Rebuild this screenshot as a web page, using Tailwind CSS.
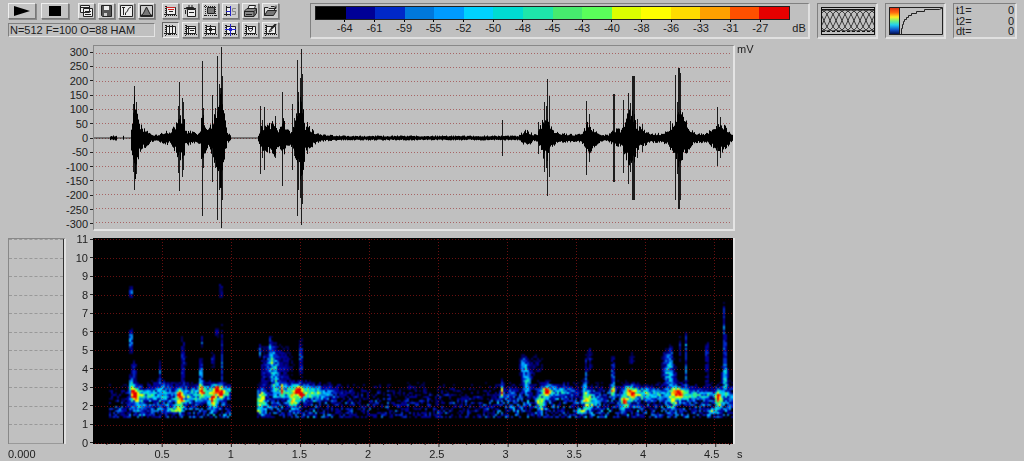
<!DOCTYPE html>
<html lang="en">
<head>
    <meta charset="UTF-8">
    <meta name="viewport" content="width=device-width, initial-scale=1.0">
    <title>Sound Analysis</title>
    <script src="https://cdn.jsdelivr.net/npm/@tailwindcss/browser@4"></script>
</head>
<body class="bg-[#c0c0c0] min-h-screen text-[11px] leading-3 text-[#202020] font-['Liberation_Sans',Arial,sans-serif] overflow-x-hidden">

    <!-- Toolbar -->
    <header class="flex items-start pl-2 pr-[7px] pt-[3px] gap-[7px]">
        <div class="flex gap-[7px] mr-6 shrink-0">
            <div class="flex flex-col gap-1 w-[147px]">
                <div class="flex justify-between">
                    <button aria-label="Play" class="w-7 h-4 bg-[#c4c4c4] border border-t-[#eee] border-l-[#eee] border-r-[#777] border-b-[#777] shadow-[1px_1px_0_#8a8a8a] flex items-center justify-center">
                        <svg width="16" height="10" viewBox="0 0 16 10"><path d="M0 0L16 5L0 10Z" fill="#000"/></svg>
                    </button>
                    <button aria-label="Stop" class="w-7 h-4 bg-[#c4c4c4] border border-t-[#eee] border-l-[#eee] border-r-[#777] border-b-[#777] shadow-[1px_1px_0_#8a8a8a] flex items-center justify-center">
                        <svg width="12" height="10"><rect width="12" height="10" fill="#000"/></svg>
                    </button>
                    <div id="fileTools" class="flex gap-[3px] ml-1"></div>
                </div>
                <div class="h-[14px] pl-px whitespace-nowrap border border-t-[#808080] border-l-[#808080] border-r-[#e4e4e4] border-b-[#e4e4e4]">N=512 F=100 O=88 HAM</div>
            </div>
            <div id="viewTools" class="grid grid-cols-6 gap-x-[3px] gap-y-[3px]"></div>
        </div>

        <!-- dB scale -->
        <div class="flex-1 flex h-9 pl-1 pt-[2px] border-t border-l border-t-[#808080] border-l-[#808080] border-r-2 border-b-2 border-r-[#e0e0e0] border-b-[#e0e0e0]">
            <div class="flex-1">
                <div id="scaleBar" class="flex h-[14px] border border-[#202020]"></div>
                <div id="scaleLabels" class="grid grid-cols-[repeat(32,minmax(0,1fr))]"></div>
            </div>
            <div class="w-[18px] pt-4 text-center">dB</div>
        </div>

        <!-- window overlap -->
        <div class="w-[61px] h-9 shrink-0 p-[3px] border-t border-l border-t-[#808080] border-l-[#808080] border-r-2 border-b-2 border-r-[#e0e0e0] border-b-[#e0e0e0]">
            <svg id="overlap" width="54" height="28" viewBox="0 0 54 28" fill="none" stroke="#111"></svg>
        </div>

        <!-- colour curve -->
        <div class="w-[61px] h-9 shrink-0 p-[3px] border-t border-l border-t-[#808080] border-l-[#808080] border-r-2 border-b-2 border-r-[#e0e0e0] border-b-[#e0e0e0]">
            <svg width="54" height="28" viewBox="0 0 54 28" fill="none" stroke="#222">
                <defs>
                    <linearGradient id="rainbow" x1="0" y1="0" x2="0" y2="1">
                        <stop offset="0" stop-color="#d82010"/><stop offset=".2" stop-color="#ff6a10"/>
                        <stop offset=".36" stop-color="#ffec20"/><stop offset=".5" stop-color="#70f080"/>
                        <stop offset=".64" stop-color="#20d0f0"/><stop offset=".82" stop-color="#1050c8"/>
                        <stop offset="1" stop-color="#000030"/>
                    </linearGradient>
                </defs>
                <rect x="0" y="0" width="10" height="28" fill="url(#rainbow)" stroke="none"/>
                <path d="M.5 .5H53.5V27.5H.5ZM10.5 0V28"/>
                <path d="M12.5 27V21.5H13.5V17.5H14.5V14.5H15.5V12.5H17.5V10.5H19.5V8.5H22.5V6.5H27.5V4.5H35.5V2.5H50.5L53 1"/>
            </svg>
        </div>

        <!-- cursor times -->
        <dl class="w-16 h-9 shrink-0 grid grid-cols-2 pl-[2px] pr-px pt-px leading-[10px] border-t border-l border-t-[#808080] border-l-[#808080] border-r-2 border-b-2 border-r-[#e0e0e0] border-b-[#e0e0e0]">
            <dt>t1=</dt><dd class="text-right">0</dd>
            <dt>t2=</dt><dd class="text-right">0</dd>
            <dt>dt=</dt><dd class="text-right">0</dd>
        </dl>
    </header>

    <main class="grid grid-cols-[58px_27px_63.2%_1fr] pl-2 pt-[6px]">
        <!-- waveform -->
        <div></div>
        <div id="mvLabels" class="flex flex-col"></div>
        <div class="h-[186px] border-t border-l border-t-[#888] border-l-[#888] border-r-2 border-b-2 border-r-[#e4e4e4] border-b-[#e4e4e4]">
            <canvas id="wave" width="639" height="183" class="block w-full h-full"></canvas>
        </div>
        <div class="pl-[2px] -mt-[2px]">mV</div>

        <!-- spectrogram -->
        <div class="mt-[7px] h-[206px] border-t border-l border-[#888] border-r-2 border-r-[#e0e0e0]">
            <div id="spectrumRows" class="h-full flex flex-col border-r border-[#303030] border-b border-b-[#999]"></div>
        </div>
        <div id="khzLabels" class="flex flex-col -mt-[1px] -mb-[8px]"></div>
        <div class="mt-[7px] h-[206px] border-r-2 border-[#e4e4e4] bg-black">
            <canvas id="spectrogram" width="640" height="206" class="block w-full h-full"></canvas>
        </div>
        <div></div>

        <!-- time axis -->
        <div class="pt-1">0.000</div>
        <div></div>
        <div>
            <svg id="timeTicks" class="block w-full h-1" stroke="#222"></svg>
            <div id="timeLabels" class="flex"><span class="w-[5.4%] shrink-0"></span></div>
        </div>
        <div class="pl-[2px] pt-1">s</div>
    </main>

    <script>
        const palette = ['#000000', '#000096', '#0028c8', '#0078dc', '#009bff', '#00d2ff', '#00dcd2', '#1ee6aa',
            '#46eb6e', '#5aff5a', '#dcff00', '#ffff00', '#ffdc00', '#ffa000', '#ff5000', '#e60000'];
        const dbValues = [-64, -61, -59, -55, -52, -50, -48, -45, -43, -40, -38, -36, -33, -31, -27];
        const duration = 4.64;

        // fixed seed so every reload draws the same recording
        let seed = 4711;
        function rnd() {
            seed = (seed * 1664525 + 1013904223) >>> 0;
            return seed / 4294967296;
        }

        // ---- toolbar icons, 13 x 12 ----
        const frame = '<path fill="#eee" stroke="none" d="M3 3H11V9H3Z"/><path d="M2.5 1V11M0 9.5H12M2 2.5H11.5V9"/><path stroke-dasharray="1 1" d="M1.5 1V12M2 10.5H13"/>';
        const fileIcons = {
            'Copy': '<path fill="#eee" d="M.5 .5H9.5V7.5H.5ZM3.5 3.5H12.5V11.5H3.5Z"/><path d="M1 2.5H9M5 6.5H11M5 9.5H11"/>',
            'Save': '<path fill="#555" d="M1.5 .5H11.5V11.5H2.5L1.5 10.5Z"/><path fill="#eee" stroke="none" d="M4 1H9V5H4Z"/><path fill="#ccc" stroke="none" d="M4 8H7V11H4Z"/>',
            'Curve': '<path fill="#eee" d="M.5 .5H12.5V11.5H.5Z"/><path d="M2 2.5H5M3.5 2V10M5.5 10V8L7.5 6L8.5 3.5L11 2"/>',
            'Window': '<path fill="#ccc" d="M.5 .5H12.5V11.5H.5Z"/><path fill="#777" d="M1 10.5L3 9L6.5 2L10 9L12 10.5Z"/>'
        };
        const viewIcons = {
            'Selection': frame + '<path stroke="#c22" d="M4 4.5H10M2 2.5H11"/><path d="M5 6.5H9"/>',
            'Paste': '<path fill="#eee" d="M3.5 4.5H11.5V11.5H3.5Z"/><path fill="#222" d="M2.5 2.5H9.5V4H2.5Z"/><path d="M0 3.5H12M5 0V2M8 0V2M5 7.5H10M1.5 5V9"/>',
            'Zoom area': '<path fill="#777" d="M3.5 2.5H10.5V8.5H3.5Z"/><path stroke-dasharray="1 1" d="M0 1.5H12M1.5 0V11M0 10.5H13M11.5 2V12"/>',
            'Spectrum': '<path fill="#eee" stroke="none" d="M2 2H6V10H2Z"/><path d="M2.5 1V11M0 9.5H6M2 2.5H6"/><path stroke="#22c" d="M6.5 1V11M2 6.5H6"/><path stroke="#888" d="M12 3.5H8.5V6.5H11.5V9.5H8"/>',
            'Print': '<path fill="#eee" d="M4 4L5 .5H11.5L10 5"/><path fill="#888" d="M.5 6L3 3.5H12.5V8L10 11.5H.5Z"/><path d="M1 6.5H10V11M10 6.5L12.5 4M2 9.5H8"/>',
            'Open': '<path fill="#ddd" d="M.5 10.5V2.5H4L5 3.5H10.5V5.5"/><path fill="#777" d="M.5 10.5L3.5 5.5H12.5L9.5 10.5Z"/><path d="M7 1.5H10L12 3M12 .5V3.5H9"/>',
            'Vertical markers': frame + '<path d="M5.5 1V11M8.5 1V11"/>',
            'Horizontal markers': frame + '<path d="M2 4.5H11M4.5 2V9M6 6.5H10"/>',
            'Grid': frame + '<path d="M6.5 1V11M2 5.5H12M5 4.5H8M5 6.5H8"/>',
            'Cursor': frame + '<path stroke="#22c" d="M6.5 0V12M1 5.5H12M5 4.5H8M5 6.5H8"/>',
            'Marker': frame + '<path d="M4.5 3V6L6.5 7.5L8.5 6V3M5 4.5H8"/>',
            'Edit': frame + '<path stroke-width="2" d="M12 0L7 5"/><path d="M5 8L6.5 5L8 6.5Z"/>'
        };

        function addIcons(id, icons) {
            const box = document.getElementById(id);
            for (const name in icons) {
                const pressed = name === 'Vertical markers';
                box.innerHTML += `
                    <button aria-label="${name}" class="${pressed
                        ? 'w-[17px] h-4 bg-[#d0d0d0] border border-t-[#666] border-l-[#666] border-r-[#eee] border-b-[#eee] flex items-center justify-center'
                        : 'w-[17px] h-4 bg-[#ccc] border border-t-[#eee] border-l-[#eee] border-r-[#777] border-b-[#777] shadow-[1px_1px_0_#8a8a8a] flex items-center justify-center'}">
                        <svg width="13" height="12" viewBox="0 0 13 12" fill="none" stroke="#222">${icons[name]}</svg>
                    </button>`;
            }
        }
        addIcons('fileTools', fileIcons);
        addIcons('viewTools', viewIcons);

        // ---- dB scale ----
        palette.forEach(c => {
            document.getElementById('scaleBar').innerHTML += `<div class="flex-1" style="background:${c}"></div>`;
        });
        document.getElementById('scaleLabels').innerHTML = '<div></div>' + dbValues.map(v => `
            <div class="col-span-2 flex flex-col items-center"><i class="w-px h-[2px] bg-black"></i><span>${v}</span></div>`).join('');

        // ---- overlapping windows ----
        let arcs = '<path d="M0 .5H54M.5 0V28M53.5 0V28M0 27.5H54M0 2.5H54"/><path stroke-dasharray="3 2" d="M1 24.5H54"/><g stroke-width=".8">';
        for (let x = -30; x < 54; x += 6) {
            arcs += `<path d="M${x} 24C${x + 9} 24 ${x + 9} 3 ${x + 18} 3S${x + 27} 24 ${x + 36} 24"/>`;
        }
        document.getElementById('overlap').innerHTML = arcs + '</g>';

        // ---- axis labels ----
        for (let v = 300; v >= -300; v -= 50) {
            document.getElementById('mvLabels').innerHTML += `
                <div class="flex-1 flex items-center justify-end gap-[2px]"><span>${v}</span><i class="w-[3px] h-px bg-[#222]"></i></div>`;
        }
        for (let v = 11; v >= 0; v--) {
            document.getElementById('khzLabels').innerHTML += `
                <div class="flex-1 flex items-center justify-end gap-[2px]"><span>${v}</span><i class="w-[3px] h-px bg-[#222]"></i></div>`;
        }
        for (let i = 0; i < 11; i++) {
            document.getElementById('spectrumRows').innerHTML += '<div class="flex-1 border-t border-dashed border-[#999]"></div>';
        }
        for (let i = 1; i <= 46; i++) {
            const x = i / 10 / duration * 100 + '%';
            document.getElementById('timeTicks').innerHTML += `<line x1="${x}" x2="${x}" y1="0" y2="${i % 5 ? 1 : 3}"/>`;
        }
        for (let i = 1; i <= 9; i++) {
            document.getElementById('timeLabels').innerHTML += `<span class="w-[10.7%] shrink-0 text-center">${i / 2}</span>`;
        }

        // ---- waveform: body envelope [x, amplitude] and peaks [x, up, down, width] ----
        const envelope = [[93,.5],[109,.5],[110,2],[116,2],[117,.5],[122,.5],[123,2],[124,.5],[130,.5],[131,10],[133,30],[135,38],[137,22],
            [139,14],[142,9],[147,7],[150,4],[153,3],[158,3],[162,5],[166,6],[170,4],[172,8],[175,12],[178,17],[181,18],[184,15],
            [185,6],[190,6],[196,4],[200,5],[201,20],[203,22],[206,10],[209,9],[212,14],[216,25],[218,32],[220,50],[222,35],
            [225,14],[227,4],[229,4],[231,.5],[257,.5],[259,5],[261,10],[268,12],[271,12],[275,16],[278,8],[280,12],[283,16],
            [286,8],[290,6],[293,10],[296,20],[300,38],[303,28],[305,10],[308,11],[311,8],[315,5],[320,3],[340,2],[518,2],
            [522,5],[526,7],[530,5],[533,3],[537,3],[540,10],[543,16],[547,19],[550,10],[556,5],[562,4],[575,3],[580,4],
            [584,8],[587,13],[590,12],[593,8],[597,6],[600,3],[608,3],[612,6],[616,8],[620,7],[623,12],[626,18],[630,24],
            [634,20],[636,10],[640,9],[645,6],[650,4],[662,4],[667,6],[670,10],[675,16],[679,26],[683,18],[687,12],[690,8],
            [695,4],[706,4],[712,8],[718,12],[722,12],[726,9],[730,4],[733,3]];
        const peaks = [[133,34,34],[134,52,52],[136,36,36],[178,32,35],[179,56,53],[182,40,39],[183,36,32],[202,77,78],[203,30,30],
            [212,43,44],[215,30,30],[217,82,82],[219,54,52],[220,50,50,2],[221,91,90],[222,62,62],[260,32,36],[262,18,20],[264,31,32],
            [275,22,20],[282,46,48],[292,34,32],[294,20,18],[297,78,78],[298,46,52],[300,60,60],[301,89,87],[302,64,66],[307,16,16],
            [502,18,18],[538,16,16],[544,36,34],[546,32,30],[547,59,58],[549,42,39],[586,37,37],[589,24,24],[613,44,44,2],[623,38,35],
            [628,45,46],[630,35,34],[632,62,62,3],[637,19,20],[642,14,14],[670,17,12],[675,63,62],[677,36,36],[678,70,71,2],
            [680,65,62],[717,31,28],[720,21,20],[725,11,11]];

        function drawWave() {
            const ctx = document.getElementById('wave').getContext('2d');
            const mid = 92;
            ctx.fillStyle = 'rgba(150,40,40,.6)';
            for (let i = -6; i <= 6; i++) {
                const y = Math.round(mid + i * 14.1 - 0.5);
                for (let x = 2; x < 638; x += 3) ctx.fillRect(x, y, 1, 1);
            }
            ctx.fillStyle = '#000';
            let k = 0;
            for (let x = 94; x < 733; x++) {
                while (k < envelope.length - 2 && envelope[k + 1][0] < x) k++;
                const [x0, a0] = envelope[k], [x1, a1] = envelope[k + 1];
                const a = a0 + (a1 - a0) * (x - x0) / (x1 - x0);
                const up = a <= .5 ? .4 : a * (.7 + rnd() * .6), down = a <= .5 ? .4 : a * (.7 + rnd() * .6);
                ctx.fillRect(x - 94, mid - up, 1, up + down);
            }
            ctx.fillStyle = 'rgba(0,0,0,.85)';
            peaks.forEach(([x, up, down, w = 1]) => ctx.fillRect(x - 94, mid - up, w, up + down));
        }

        // ---- spectrogram: energy spots [x, y, rx, ry, level] ----
        const spots = [[131,292,1,4,.4],[131,341,1,8,.48],[134,372,2,12,.13],[131,384,1,8,.3],[132,391,2,6,.7],[135,395,2,4,1],[137,395,5,7,.5],[147,395,9,4,.38],[140,407,8,6,.16],
            [121,411,3,3,.2],[162,390,8,7,.2],[165,402,10,12,.14],[160,372,1,9,.18],
            [180,401,3,8,.6],[179,394,2,4,.55],[181,398,1,3,.5],[176,410,5,2,.6],[183,396,5,8,.25],[194,396,12,7,.3],[183,362,2,20,.15],
            [201,375,1,12,.4],[201,389,2,5,.6],[203,391,2,4,.5],[211,391,9,5,.38],[213,399,3,4,.75],[213,405,4,8,.35],[217,389,2,3,.9],[221,393,2,4,.85],[220,392,7,6,.45],[228,392,5,4,.3],
            [222,360,1,28,.15],[213,360,1,6,.2],[202,340,1,5,.18],[221,290,1,8,.14],[217,333,1,4,.14],
            [261,401,5,10,.38],[261,398,3,6,.4],[260,350,1,6,.3],[264,372,2,20,.14],[259,411,4,2,.25],[272,362,4,14,.38],[275,384,3,16,.4],[270,344,1,5,.25],[283,365,9,18,.1],
            [282,388,1,6,.55],[282,393,2,4,.4],[290,391,9,6,.35],[293,402,3,5,.5],[293,399,4,10,.3],[298,390,2,4,.85],[301,394,2,4,.85],[301,392,7,6,.45],[312,393,11,6,.32],[326,394,18,6,.17],[301,360,1,18,.26],
            [502,391,1,7,.6],[502,393,1,4,.35],[512,394,7,5,.13],[524,367,3,8,.33],[527,383,3,12,.33],[536,365,8,12,.06],
            [540,400,3,4,.55],[541,405,3,8,.35],[547,392,3,4,.7],[546,391,5,6,.5],[557,391,9,4,.28],[570,393,12,5,.13],
            [588,401,4,7,.5],[587,398,2,3,.35],[582,411,5,2,.5],[585,390,2,8,.25],[595,400,8,8,.2],[586,372,1,16,.15],[590,360,2,12,.1],
            [613,372,1,12,.3],[613,391,2,5,.9],[624,401,3,4,.6],[625,404,4,8,.35],[629,390,3,3,.55],[633,395,2,4,.8],[632,393,8,6,.5],[646,394,12,5,.33],[662,395,14,5,.18],[632,360,3,10,.06],
            [668,365,4,12,.28],[670,380,5,14,.23],[673,402,4,7,.5],[677,392,3,3,.75],[680,395,2,4,.5],[679,393,8,6,.45],[692,395,10,5,.28],[710,395,20,3,.26],
            [686,346,1,10,.22],[686,372,1,12,.22],[707,352,1,8,.22],[707,375,1,18,.15],[680,348,1,12,.12],[671,352,1,6,.2],
            [724,322,1,14,.22],[725,350,1,14,.26],[725,378,2,14,.4],[719,400,3,8,.6],[718,398,2,4,.45],[713,411,5,2,.45],[728,397,5,10,.2]];

        function drawSpectrogram() {
            const ctx = document.getElementById('spectrogram').getContext('2d');
            const small = document.createElement('canvas');
            small.width = 320;
            small.height = 103;
            const sctx = small.getContext('2d');
            for (let j = 0; j < 103; j++) {
                for (let i = 0; i < 320; i++) {
                    const x = 93 + i * 2 + 1, y = 238 + j * 2 + 1;
                    let v = 0;
                    spots.forEach(([sx, sy, rx, ry, level]) => {
                        const dx = (x - sx) / (rx + .3), dy = (y - sy) / (ry + .3), d = dx * dx + dy * dy;
                        if (d < 6) v += level * Math.exp(-d);
                    });
                    // low background band fades out upwards, silent before the first call and at the cut
                    let band = 0;
                    if (x > 108 && y < 418) {
                        const quiet = x < 130 || (x > 335 && x < 495);
                        band = (quiet ? .12 : .19) * Math.max(0, Math.min(1, (y - 378) / 24));
                    }
                    // strong parts stay solid, weak parts break up into speckle
                    const spread = v > .5 ? .5 : 1.3;
                    v = v * .92 * (1 - spread / 2 + rnd() * spread) + band * (rnd() * rnd() * 2.2 - .15);
                    if (y > 417 || (x > 231 && x < 257)) v = 0;
                    if (v < .035) continue;
                    const t = Math.min(v, .999) * 15.9, n = Math.floor(t);
                    sctx.globalAlpha = n === 0 ? t * .8 : 1;
                    sctx.fillStyle = palette[Math.max(n, 1)];
                    sctx.fillRect(i, j, 1, 1);
                }
            }
            ctx.fillStyle = '#000';
            ctx.fillRect(0, 0, 640, 206);
            ctx.drawImage(small, 0, 0, 640, 206);
            // grid
            ctx.fillStyle = 'rgba(190,30,30,.55)';
            for (let k = 0; k <= 11; k++) {
                const y = Math.round(1 + k * 18.55);
                for (let x = 2; x < 640; x += 3) ctx.fillRect(x, y, 1, 1);
            }
            for (let k = 1; k <= 9; k++) {
                const x = Math.round(k * .5 / duration * 640);
                for (let y = 1; y < 206; y += 3) ctx.fillRect(x, y, 1, 1);
            }
        }

        drawWave();
        drawSpectrogram();
    </script>
</body>
</html>
